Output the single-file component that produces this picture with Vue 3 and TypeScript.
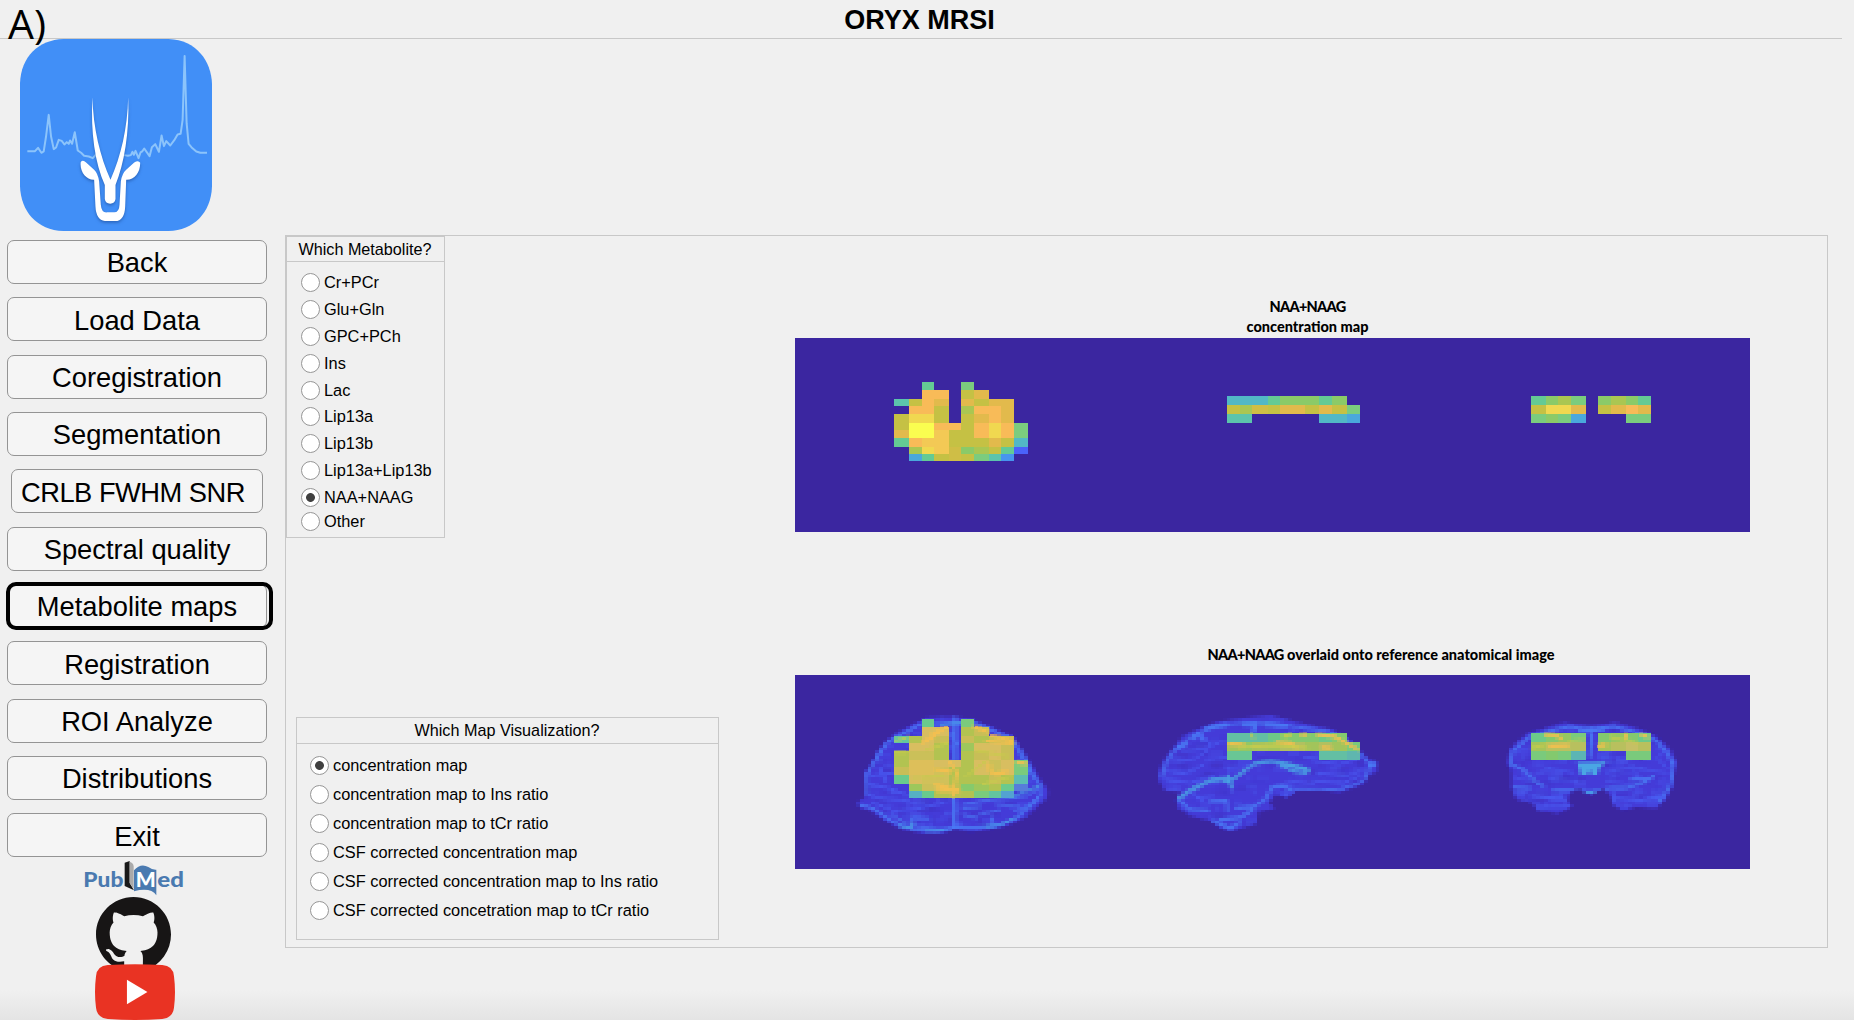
<script setup lang="ts">
import { onMounted, ref } from 'vue'

interface Block { ox: number; oy: number; blend: number; xs: number[]; ys: number[]; rows: string[] }
interface Stroke { d: string; w: number; c: string }
interface Brain { ox: number; box: [number, number]; outline: string; strokes: Stroke[]; glow: Stroke[]; fills?: Stroke[] }

const steps = ['Back', 'Load Data', 'Coregistration', 'Segmentation', 'CRLB FWHM SNR', 'Spectral quality',
  'Metabolite maps', 'Registration', 'ROI Analyze', 'Distributions', 'Exit']
const activeStep = ref('Metabolite maps')

const metabolites = ['Cr+PCr', 'Glu+Gln', 'GPC+PCh', 'Ins', 'Lac', 'Lip13a', 'Lip13b', 'Lip13a+Lip13b', 'NAA+NAAG', 'Other']
const metabolite = ref('NAA+NAAG')

const maps = ['concentration map', 'concentration map to Ins ratio', 'concentration map to tCr ratio',
  'CSF corrected concentration map', 'CSF corrected concentration map to Ins ratio',
  'CSF corrected concetration map to tCr ratio']
const mapKind = ref('concentration map')

const mapCanvas = ref<HTMLCanvasElement | null>(null)
const overlayCanvas = ref<HTMLCanvasElement | null>(null)

const W = 955
const H = 194
const PX = 3.82
const PY = 2.6944
const BACK = '#3b26a0'

const palette: Record<string, string> = {
  B: '#4a63fa', b: '#4795ee', c: '#4aa8dc', a: '#52b8c6', t: '#5cc4ac', g: '#64ca94', G: '#7bcc7e',
  l: '#8bca68', L: '#aac652', k: '#c5c144', K: '#cfbe46', o: '#e2ba4c', O: '#f8bb58', y: '#f3c955',
  Y: '#f0d850', X: '#fafd50',
}
const overlayPalette: Record<string, string> = { ...palette, X: '#ffbc50', Y: '#e6bd4e', y: '#eebe50' }

const blocks: Block[] = [
  {
    ox: 85, oy: 32.5, blend: 0.25,
    xs: [42, 87, 125, 162, 207, 243, 282, 327, 363, 401, 445],
    ys: [33, 57, 84, 105, 129, 156, 179, 201, 228, 251, 272],
    rows: ['..g..G....', '..OO.ko...', 'tkOo.okoo.', '.OOk.LOOo.', 'kYYk.koOo.', 'kXXOOkOYOG', 'oXXykkOYOG',
      'gOyykkkoka', '.LYyKlLkgB', '.cgkKkGtb.'],
  },
  {
    ox: 415, oy: 42.5, blend: 0.45,
    xs: [51, 90, 126, 173, 209, 246, 285, 327, 365, 411, 449],
    ys: [45, 72, 100, 126],
    rows: ['aaaglllgl.', 'kLKkookokG', 'tt.....aac'],
  },
  {
    ox: 720, oy: 42.5, blend: 0.4,
    xs: [48, 93, 130, 168, 213, 249, 288, 333, 369, 408],
    ys: [45, 72, 100, 126],
    rows: ['glLG.lLlg', 'kYYo.koOo', 'GlGc...GG'],
  },
]

const S1 = '#4a5ff4'
const S2 = '#4a7df5'
const S3 = '#4aa6e4'
const GOLD = '#f8bf4e'
const LIME = '#c8cc4c'

const brains: Brain[] = [
  {
    ox: 45, box: [690, 450],
    outline: 'M52 303L75 288L72 215L95 185L120 140L145 112L180 90L222 68L262 50L345 47L400 56L450 75L520 105L548 148L575 190L602 235L624 268L622 290L592 318L558 348L500 374L440 386L390 392L345 382L310 397L250 396L190 386L140 362L90 328L60 322Z',
    strokes: [
      { d: 'M80 280L80 220L110 170L140 125L190 98L240 70L330 66L410 68L510 110L540 155L575 215L600 250L600 285L565 320L530 350L470 374L400 380L345 378L290 390L220 385L150 358L100 322L60 312', w: 9, c: S2 },
      { d: 'M345 50L345 175M340 290C350 320 338 345 345 378M335 100L350 130', w: 16, c: S2 },
      { d: 'M90 250L145 262L200 280M80 280C120 300 160 290 215 302L240 320L310 306M120 200L135 240M95 225L160 215M100 305L160 330L240 322', w: 8, c: S1 },
      { d: 'M160 345L220 375L215 350L265 352M225 375L330 388M370 322L420 318M370 342L410 350M455 350L460 375M370 310L450 296L520 290L560 285L595 262M425 338L480 328', w: 8, c: S2 },
      { d: 'M180 375L215 382L218 366M260 390L310 388M440 376L480 372L520 352M520 285L560 270L598 255M305 70L370 64', w: 8, c: S3 },
      { d: 'M600 285L560 318L525 330M470 310L540 318M540 120L560 180L580 235M165 120L205 110', w: 7, c: S2 },
    ],
    glow: [
      { d: 'M275 98L320 80M250 125L300 92M402 76L442 92M440 120L516 128M455 104L516 118M285 250L356 270M330 184L352 215L342 260M295 268L355 266M448 190C445 220 460 225 500 212M285 205L330 212M530 184L558 188M340 285L346 262', w: 10, c: GOLD },
      { d: 'M260 145L320 128M410 150L500 165M430 250L510 228M380 225L440 180M220 230L310 225M168 155L200 155M170 118L200 110', w: 8, c: LIME },
    ],
  },
  {
    ox: 345, box: [750, 450],
    outline: 'M55 210L72 172L102 140L125 105L170 86L230 62L310 52L390 44L450 58L520 74L580 85L630 115L662 150L690 175L711 180L711 212L690 220L670 250L600 274L540 268L470 270L440 290L405 282L385 305L405 322L355 332L350 368L300 382L270 391L240 380L210 358L150 344L115 322L108 295L122 272L75 270L55 238Z',
    strokes: [
      { d: 'M65 225L80 180L115 135L165 100L230 74L310 66L400 66L470 78L560 90L620 115L665 160L690 190L675 240L600 266L470 264', w: 8, c: S2 },
      { d: 'M115 140L140 128M160 110L178 98L190 115M200 80L260 70M310 70L350 68L338 95M375 70L440 74M690 190L705 190', w: 14, c: S2 },
      { d: 'M255 240C290 250 300 205 345 188C400 172 440 185 505 208', w: 11, c: S3 },
      { d: 'M115 292L135 278L165 262L210 238L262 232M265 225L275 258', w: 13, c: S3 },
      { d: 'M420 190L500 202L500 216L450 208Z', w: 9, c: S3 },
      { d: 'M290 322L340 318L375 295L395 258L430 255L460 270M240 355L300 350L340 325M120 300L150 325L205 330M210 300L260 298L262 330M220 360L270 382L300 365', w: 10, c: S2 },
      { d: 'M80 210L140 218L190 190M75 235L150 245L220 225M110 180L160 175L200 150M130 150L190 145L250 120M180 100L210 130M150 270L190 300M170 290L220 285M520 180L600 190L660 170M530 215L620 225L670 205M520 240L610 246L650 230M490 170L540 165M200 175L300 165M260 200L330 195M450 240L520 248', w: 7, c: S1 },
    ],
    glow: [
      { d: 'M268 130L310 132M410 124L455 127L468 140M532 101L585 107L620 126L653 146M548 139L570 141M485 101L498 101', w: 10, c: GOLD },
      { d: 'M300 140L400 132L500 140M335 101L340 110M432 107L450 101', w: 9, c: LIME },
    ],
  },
  {
    ox: 695, box: [600, 450],
    outline: 'M50 185L60 145L88 115L112 95L150 86L220 64L300 74L380 64L450 84L500 105L540 145L561 185L552 222L548 255L530 290L500 322L440 318L400 328L370 312L362 285L340 262L300 282L265 262L240 275L235 300L248 316L205 338L140 328L130 306L80 296L65 262L64 212Z',
    strokes: [
      { d: 'M62 185L70 150L115 110L170 92L240 76L300 88L370 76L440 94L500 120L535 160L550 195L540 255L510 300', w: 9, c: S2 },
      { d: 'M64 190L100 205L140 245L160 255M70 260L120 262M190 268L260 268L300 272L360 262L410 262L460 245L490 225M420 235L480 232', w: 9, c: S2 },
      { d: 'M225 302L215 285M370 275L375 300M135 318L240 316M125 285L220 295M380 292L450 298L520 285', w: 9, c: S1 },
      { d: 'M275 275L325 275', w: 10, c: S3 },
      { d: 'M300 80L305 110L300 165M270 90L340 84', w: 12, c: S2 },
      { d: 'M80 150L120 140M75 230L120 240M90 215L120 235M420 200L530 215M430 210L450 230M530 150L500 170L530 200M170 200L250 215M350 215L430 195M180 235L260 240M350 240L420 250', w: 6, c: S1 },
    ],
    fills: [{ d: 'M262 184L350 182L328 200L322 222L305 222L300 205L292 222L272 222Z', w: 0, c: '#4aa6e4' }],
    glow: [
      { d: 'M165 101L200 103L212 112M406 101L410 112M328 135L345 131M455 101L472 108M180 136L235 134', w: 10, c: GOLD },
      { d: 'M130 140L165 132M360 108L440 125M240 120L280 116', w: 8, c: LIME },
    ],
  },
]

function mix(a: string, b: string, t: number): string {
  const p = (s: string, i: number) => parseInt(s.slice(i, i + 2), 16)
  const v = [1, 3, 5].map(i => Math.round(p(a, i) * (1 - t) + p(b, i) * t))
  return `rgb(${v.join(',')})`
}

function paintBlocks(ctx: CanvasRenderingContext2D, overlay: boolean) {
  const colors = overlay ? overlayPalette : palette
  for (const b of blocks) {
    b.rows.forEach((row, r) => {
      for (let c = 0; c < b.xs.length - 1; c++) {
        const ch = row[c]
        if (!ch || !colors[ch]) continue
        const x0 = Math.round(b.ox + b.xs[c] / 3)
        const x1 = Math.round(b.ox + b.xs[c + 1] / 3)
        const y0 = Math.round(b.oy + b.ys[r] / 3)
        const y1 = Math.round(b.oy + b.ys[r + 1] / 3)
        ctx.fillStyle = mix(colors[ch], '#78c878', overlay ? b.blend : 0)
        ctx.fillRect(x0, y0, x1 - x0, y1 - y0)
      }
    })
  }
}

function lowRes(paint: (c: CanvasRenderingContext2D) => void): HTMLCanvasElement {
  const cv = document.createElement('canvas')
  cv.width = Math.round(W / PX)
  cv.height = Math.round(H / PY)
  const c = cv.getContext('2d')!
  c.scale(1 / PX, 1 / PY)
  c.lineCap = 'round'
  c.lineJoin = 'round'
  paint(c)
  return cv
}

function place(c: CanvasRenderingContext2D, b: Brain, fn: () => void) {
  c.save()
  c.translate(b.ox, 26)
  c.scale(1 / 3, 1 / 3)
  fn()
  c.restore()
}

function strokeAll(c: CanvasRenderingContext2D, list: Stroke[], alpha: number) {
  c.globalAlpha = alpha
  for (const s of list) {
    c.strokeStyle = s.c
    c.lineWidth = s.w
    c.stroke(new Path2D(s.d))
  }
  c.globalAlpha = 1
}

onMounted(() => {
  const m = mapCanvas.value!.getContext('2d')!
  m.fillStyle = BACK
  m.fillRect(0, 0, W, H)
  paintBlocks(m, false)

  const o = overlayCanvas.value!.getContext('2d')!
  o.fillStyle = BACK
  o.fillRect(0, 0, W, H)
  o.imageSmoothingEnabled = false
  let seed = 11
  const rnd = () => { seed = (seed * 16807) % 2147483647; return seed / 2147483647 }
  const tissue = lowRes(c => {
    for (const b of brains) {
      place(c, b, () => {
        const shape = new Path2D(b.outline)
        c.fillStyle = '#443bd8'
        c.fill(shape)
        c.save()
        c.clip(shape)
        for (let i = 0; i < 420; i++) {
          const x = rnd() * b.box[0]
          const y = rnd() * b.box[1]
          c.globalAlpha = 0.12 + rnd() * 0.25
          c.fillStyle = rnd() > 0.45 ? '#4c63f4' : '#4030bc'
          c.fillRect(x, y, 12 + rnd() * 30, 8 + rnd() * 12)
        }
        c.globalAlpha = 1
        strokeAll(c, b.strokes, 0.8)
        for (const f of b.fills ?? []) {
          c.fillStyle = f.c
          c.fill(new Path2D(f.d))
        }
        c.restore()
      })
    }
  })
  o.drawImage(tissue, 0, 0, W, H)
  paintBlocks(o, true)
  const glow = lowRes(c => {
    for (const b of brains) place(c, b, () => strokeAll(c, b.glow, 0.85))
  })
  o.drawImage(glow, 0, 0, W, H)
})
</script>

<template>
  <div class="window">
    <header class="titlebar"><h1>ORYX MRSI</h1></header>
    <span class="figure-tag">A)</span>

    <div class="body">
      <aside class="sidebar">
        <svg class="logo" viewBox="60 117 575 577" preserveAspectRatio="none">
          <path fill="#418ff7" d="M190 117H505C590 120 632 185 635 250V560C632 640 580 691 505 694H190C110 691 63 635 60 560V250C63 170 115 120 190 117Z" />
          <path fill="none" stroke="#8cc4fb" stroke-width="6" stroke-linejoin="round" d="M82 454H105L114 444L124 459L131 455L138 410L146 345L153 410L161 448L168 443L176 420L185 423L193 434L200 427L206 432L210 422L216 432L224 397L233 452L243 459L252 468L266 470L278 475L290 462M372 466L383 468L392 466L397 456L401 465L406 453L415 475L421 458L426 455L432 446L448 469L455 442L465 433L476 456L484 407L491 439L498 424L510 437L522 421L532 404L541 402L547 360L553 168L559 370L565 432L574 443L588 455L600 459H620" />
          <g class="antelope" fill="#fff">
            <path d="M277 292C279 385 300 470 331 540C362 470 382 385 384 292C388 400 372 490 346 556V598Q344 612 330 612Q316 612 314 598V556C285 490 271 400 277 292Z" />
            <path d="M242 487Q248 479 258 488L282 510Q293 520 297 545L302 615Q304 639 320 638H342Q357 638 358 615L362 545Q366 520 378 510L402 488Q415 480 420 489C420 520 402 541 378 540L375 620Q373 664 345 664H314Q288 660 286 620L282 540C258 541 238 515 242 487Z" />
          </g>
        </svg>

        <nav class="steps">
          <button v-for="s in steps" :key="s" :class="{ active: s === activeStep, narrow: s === 'CRLB FWHM SNR' }" @click="activeStep = s">{{ s }}</button>
        </nav>

        <div class="links">
          <svg class="pubmed" viewBox="0 0 300 105">
            <text x="-2" y="77" textLength="120" lengthAdjust="spacingAndGlyphs" class="pm">Pub</text>
            <path fill="#191919" d="M122 5L137 0V66L150 88L122 75Z" />
            <path fill="#aaa" d="M137 2Q147 5 149 15V84L137 66Z" />
            <path fill="#4a7ab0" d="M150 28Q170 5 193 18Q205 27 217 26V103Q200 78 150 91Z" />
            <text x="155" y="77" textLength="60" lengthAdjust="spacingAndGlyphs" class="pm white">M</text>
            <text x="220" y="77" textLength="80" lengthAdjust="spacingAndGlyphs" class="pm">ed</text>
          </svg>
          <svg class="github" viewBox="0 0 16 16">
            <path fill="#171515" d="M8 0C3.58 0 0 3.58 0 8c0 3.54 2.29 6.53 5.47 7.59.4.07.55-.17.55-.38 0-.19-.01-.82-.01-1.49-2.01.37-2.53-.49-2.69-.94-.09-.23-.48-.94-.82-1.13-.28-.15-.68-.52-.01-.53.63-.01 1.08.58 1.23.82.72 1.21 1.87.87 2.33.66.07-.52.28-.87.51-1.07-1.78-.2-3.64-.89-3.64-3.95 0-.87.31-1.59.82-2.15-.08-.2-.36-1.02.08-2.12 0 0 .67-.21 2.2.82.64-.18 1.32-.27 2-.27s1.36.09 2 .27c1.53-1.04 2.2-.82 2.2-.82.44 1.1.16 1.92.08 2.12.51.56.82 1.27.82 2.15 0 3.07-1.87 3.75-3.65 3.95.29.25.54.73.54 1.48 0 1.07-.01 1.93-.01 2.2 0 .21.15.46.55.38A8.01 8.01 0 0 0 16 8c0-4.42-3.58-8-8-8z" />
          </svg>
          <svg class="youtube" viewBox="0 0 238 166" preserveAspectRatio="none">
            <path fill="#e93323" d="M38 3Q119-2 200 3Q232 5 235 36Q241 83 235 130Q232 160 200 163Q119 169 38 163Q6 160 3 130Q-3 83 3 36Q6 5 38 3Z" />
            <path fill="#fff" d="M95 47V119L156 83Z" />
          </svg>
        </div>
      </aside>

      <main class="panel">
        <div class="options">
          <fieldset class="group metabolites">
            <h2>Which Metabolite?</h2>
            <label v-for="m in metabolites" :key="m" @click="metabolite = m"><i :class="{ on: m === metabolite }" />{{ m }}</label>
          </fieldset>
          <fieldset class="group maps">
            <h2>Which Map Visualization?</h2>
            <label v-for="m in maps" :key="m" @click="mapKind = m"><i :class="{ on: m === mapKind }" />{{ m }}</label>
          </fieldset>
        </div>
        <div class="plots">
          <h3 class="first"><span>NAA+NAAG</span><br>concentration map</h3>
          <canvas ref="mapCanvas" width="955" height="194" />
          <h3 class="second"><span>NAA+NAAG</span> overlaid onto reference anatomical image</h3>
          <canvas ref="overlayCanvas" width="955" height="194" />
        </div>
      </main>
    </div>
  </div>
</template>

<style>
html, body { margin: 0; background: #f0f0f0; }
</style>

<style scoped>
.window {
  position: relative;
  width: 1854px;
  height: 1020px;
  overflow: hidden;
  display: flex;
  flex-direction: column;
  background: linear-gradient(#f0f0f0 0 990px, #e4e4e4 1020px);
  font-family: "Liberation Sans", Arial, sans-serif;
  color: #000;
}
.titlebar {
  box-sizing: border-box;
  width: 1842px;
  height: 39px;
  flex: none;
  border-bottom: 1px solid #c8c8c8;
}
h1 {
  margin: 0;
  padding: 1px 3px 0 0;
  text-align: center;
  font-size: 27px;
  line-height: 38px;
  font-weight: 700;
}
.figure-tag {
  position: absolute;
  left: 8px;
  top: 0;
  z-index: 1;
  font: 500 41px/46px "Open Sans", "Noto Sans", sans-serif;
}
.body { display: flex; flex: 1; }
.sidebar {
  width: 285px;
  flex: none;
  display: flex;
  flex-direction: column;
}
.logo { width: 192px; height: 192px; margin-left: 20px; flex: none; }
.antelope { filter: drop-shadow(0 5px 5px rgba(20, 60, 130, .5)); }
.steps {
  display: grid;
  grid-template-rows: repeat(11, 57.33px);
  padding: 9px 0 0 7px;
  height: 619px;
}
.steps button {
  position: relative;
  box-sizing: border-box;
  width: 260px;
  height: 44px;
  padding: 2px 0 0;
  border: 1px solid #949494;
  border-radius: 7px;
  background: #f5f5f5;
  color: #000;
  font: 27.3px/1 "Liberation Sans", Arial, sans-serif;
  white-space: nowrap;
}
.steps .narrow {
  width: 252px;
  margin-left: 4px;
  padding-right: 8px;
  letter-spacing: -0.5px;
}
.steps .active::after {
  content: "";
  position: absolute;
  left: -2px;
  top: -3px;
  width: 259px;
  height: 40px;
  border: 4px solid #000;
  border-radius: 10px;
}
.links {
  display: flex;
  flex-direction: column;
  align-items: flex-start;
}
.pubmed { width: 100px; height: 35px; margin: 2px 0 0 84px; overflow: visible; }
.pm { font: 900 60px "Lato", sans-serif; fill: #4a7ab0; }
.pm.white { fill: #fff; }
.github { width: 75px; height: 75px; margin: 1px 0 0 96px; }
.youtube { position: relative; width: 80px; height: 56px; margin: -8px 0 0 95px; }
.panel {
  box-sizing: border-box;
  width: 1543px;
  height: 713px;
  margin-top: 195.5px;
  display: flex;
  border: 1px solid #c8c8c8;
}
.options {
  width: 509px;
  flex: none;
  display: flex;
  flex-direction: column;
  align-items: flex-start;
}
.group {
  box-sizing: border-box;
  margin: 0;
  padding: 0;
  min-width: 0;
  border: 1px solid #c8c8c8;
  display: flex;
  flex-direction: column;
}
.group h2 {
  margin: 0;
  padding-right: 1px;
  border-bottom: 1px solid #c8c8c8;
  text-align: center;
  font-size: 16.2px;
  font-weight: 400;
  line-height: 25px;
}
.metabolites { width: 159px; height: 302px; }
.metabolites h2 { margin-bottom: 7.6px; line-height: 24px; }
.group label {
  display: flex;
  align-items: center;
  gap: 4px;
  height: 26.9px;
  font-size: 16.35px;
  white-space: nowrap;
}
.metabolites label { padding-left: 14px; }
.metabolites label:last-child { height: 21.5px; }
.group i {
  box-sizing: border-box;
  width: 19px;
  height: 19px;
  flex: none;
  border: 1.5px solid #969696;
  border-radius: 50%;
  background: #fff;
}
.group i.on { background: radial-gradient(circle, #404040 0 4px, #fff 4.8px); }
.maps { width: 423px; height: 223px; margin: 179px 0 0 10px; }
.maps h2 { margin-bottom: 7px; }
.maps label { height: 29.1px; padding-left: 13px; }
.plots { width: 955px; flex: none; display: flex; flex-direction: column; }
.plots canvas { display: block; width: 955px; height: 194px; }
h3 {
  margin: 0;
  text-align: center;
  font: 900 14.5px/20px "Lato", sans-serif;
  white-space: nowrap;
}
h3 span { letter-spacing: -0.7px; }
.first { height: 41px; padding: 61px 0 0 70px; }
.second { height: 30px; padding: 113px 0 0 217px; }
</style>
